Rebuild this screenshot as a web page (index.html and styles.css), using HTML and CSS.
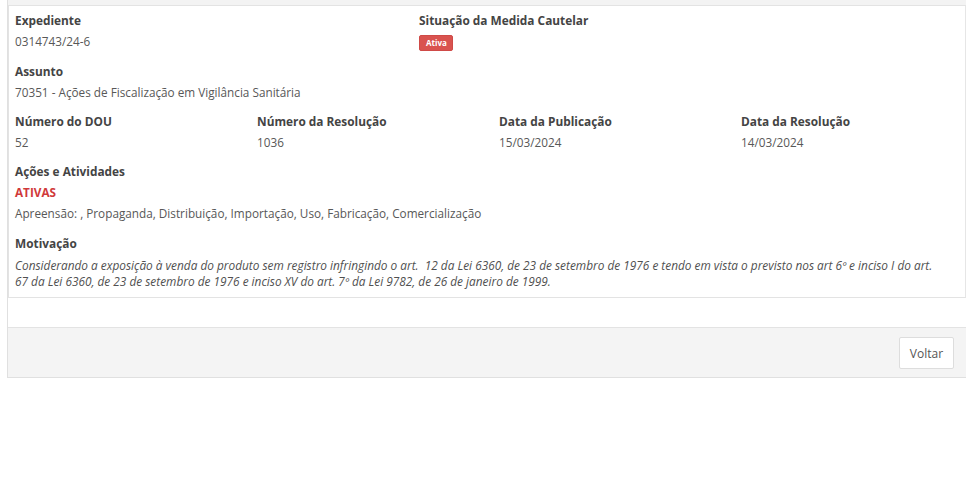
FILE: index.html
```html
<!DOCTYPE html>
<html lang="pt-BR">
    <head>
        <meta charset="UTF-8">
        <title>Medida Cautelar - Detalhes</title>
        <link rel="stylesheet" href="styles.css">
    </head>
    <body>
        <div class="panel">
            <div class="panel-top"></div>
            <div class="details">
                <div class="row row-two first">
                    <div class="field">
                        <div class="label">Expediente</div>
                        <div class="value">0314743/24-6</div>
                    </div>
                    <div class="field">
                        <div class="label">Situação da Medida Cautelar</div>
                        <div class="value"><span class="badge">Ativa</span></div>
                    </div>
                </div>
                <div class="field">
                    <div class="label">Assunto</div>
                    <div class="value">70351 - Ações de Fiscalização em Vigilância Sanitária</div>
                </div>
                <div class="row row-four">
                    <div class="field">
                        <div class="label">Número do DOU</div>
                        <div class="value">52</div>
                    </div>
                    <div class="field">
                        <div class="label">Número da Resolução</div>
                        <div class="value">1036</div>
                    </div>
                    <div class="field">
                        <div class="label">Data da Publicação</div>
                        <div class="value">15/03/2024</div>
                    </div>
                    <div class="field">
                        <div class="label">Data da Resolução</div>
                        <div class="value">14/03/2024</div>
                    </div>
                </div>
                <div class="field activities">
                    <div class="label">Ações e Atividades</div>
                    <div class="value status-red">ATIVAS</div>
                    <div class="value">Apreensão: , Propaganda, Distribuição, Importação, Uso, Fabricação, Comercialização</div>
                </div>
                <div class="field last">
                    <div class="label">Motivação</div>
                    <p class="motivation">Considerando a exposição à venda do produto sem registro infringindo o art.&nbsp; 12 da Lei 6360, de 23 de setembro de 1976 e tendo em vista o previsto nos art 6º e inciso I do art. 67 da Lei 6360, de 23 de setembro de 1976 e inciso XV do art. 7º da Lei 9782, de 26 de janeiro de 1999.</p>
                </div>
            </div>
            <div class="panel-footer">
                <button type="button" class="btn">Voltar</button>
            </div>
        </div>
    </body>
</html>
```

FILE: styles.css
```css
body { margin: 0; font-family: "Open Sans", "Liberation Sans", sans-serif; color: #555; background: #fff; }
.panel { margin-left: 7px; border-left: 1px solid #e0e0e0; }
.panel-top { height: 5px; background: #f3f3f3; }
.details { width: 930px; border: 1px solid #e3e3e3; border-right-color: #e6e6e6; padding: 3px 20px 8px 6px; margin-bottom: 29px; }
.row { display: grid; margin-bottom: 7px; }
.row-two { grid-template-columns: 404px 1fr; }
.row-four { grid-template-columns: 242px 242px 242px 1fr; }
.field { margin-bottom: 7px; }
.row .field { margin-bottom: 0; }
.row.first { margin-bottom: 8px; }
.field.activities { margin-bottom: 8px; }
.field.last { margin-bottom: 0; }
.label { font-size: 11.85px; font-weight: 700; line-height: 22px; color: #444; }
.value { font-size: 11.75px; line-height: 21px; color: #585858; }
.status-red { color: #d0393a; font-weight: 700; }
.badge { display: inline-block; vertical-align: middle; background: #d9534f; color: #fff; font-size: 8px; font-weight: 700; line-height: 14px; padding: 0 5px 0 6px; border-radius: 2px; border: 1px solid #cf4a47; }
.motivation { margin: 3px 0 0 0; font-size: 11.85px; font-style: italic; line-height: 16px; color: #505050; }
.panel-footer { background: #f4f4f4; border-top: 1px solid #e3e3e3; border-bottom: 1px solid #e0e0e0; padding: 9px 12px 8px 0; display: flex; justify-content: flex-end; }
.btn { font-family: inherit; font-size: 12px; color: #555; background: #fff; border: 1px solid #ddd; border-radius: 2px; height: 32px; width: 55px; padding: 0; }
```
